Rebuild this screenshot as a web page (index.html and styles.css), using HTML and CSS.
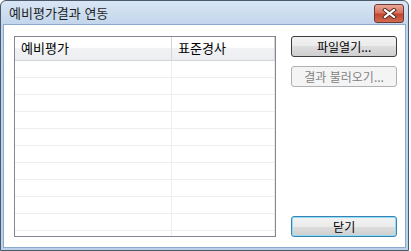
FILE: index.html
```html
<!DOCTYPE html>
<html lang="ko">
<head>
  <meta charset="UTF-8">
  <title>예비평가결과 연동</title>
  <link rel="stylesheet" href="styles.css">
</head>
<body>
  <div class="window">
    <div class="titlebar">
      <span class="title">예비평가결과 연동</span>
      <button class="close-btn" aria-label="닫기">
        <svg width="15" height="11" viewBox="0 0 15 11">
          <path d="M3 2 L12 9 M12 2 L3 9" stroke="#4a2a26" stroke-width="4" stroke-linecap="square"/>
          <path d="M3 2 L12 9 M12 2 L3 9" stroke="#fff" stroke-width="2.2" stroke-linecap="square"/>
        </svg>
      </button>
    </div>

    <div class="client">
      <div class="list">
        <div class="list-head">
          <div class="cell col-name">예비평가</div>
          <div class="cell col-grade">표준경사</div>
        </div>
        <div class="list-body" id="rows">
          <!-- rows inserted below -->
        </div>
      </div>

      <div class="side">
        <button class="btn btn-default">파일열기...</button>
        <button class="btn" disabled>결과 불러오기...</button>
        <button class="btn btn-focus bottom">닫기</button>
      </div>
    </div>
  </div>

  <script>
    // Empty grid rows
    const rows = document.getElementById('rows');
    for (let i = 0; i < 11; i++) {
      rows.innerHTML += '<div class="row"><div class="cell col-name"></div><div class="cell col-grade"></div></div>';
    }
  </script>
</body>
</html>
```

FILE: styles.css
```css
/* Global */
body {
  margin: 0;
  width: 411px;
  height: 251px;
  overflow: hidden;
  background: #fff;
  font-family: "Noto Sans CJK KR", "Noto Sans", sans-serif;
  font-size: 12px;
  color: #000;
}

/* Window frame */
.window {
  box-sizing: border-box;
  width: 409px;
  height: 251px;
  display: flex;
  flex-direction: column;
  border: 1px solid #4a5a6c;
  border-radius: 6px 6px 0 0;
  background: linear-gradient(#d9e6f4, #c2d5ec 24px, #bcd1ea);
  padding: 0 2px 2px 2px;
}

.titlebar {
  height: 24px;
  display: flex;
  align-items: center;
  justify-content: space-between;
  padding: 0 2px 0 6px;
}

.title {
  font-size: 13px;
  color: #1e1e1e;
}

.close-btn {
  width: 30px;
  height: 19px;
  margin-top: 1px;
  border: 1px solid #6e3a35;
  border-radius: 3px;
  background: linear-gradient(#eaa897, #d6735e 45%, #c4452e 55%, #d06b50);
  display: flex;
  align-items: center;
  justify-content: center;
  padding: 0;
}

/* Client area */
.client {
  flex: 1;
  display: flex;
  gap: 15px;
  background: #fff;
  border: 1px solid #8aa9cc;
  padding: 11px 8px 10px 10px;
}

/* List view */
.list {
  width: 263px;
  height: 201px;
  box-sizing: border-box;
  border: 1px solid #828790;
  overflow: hidden;
}

.list-head {
  display: flex;
  height: 24px;
  box-sizing: border-box;
  border-bottom: 1px solid #d5d5d5;
  background: linear-gradient(#ffffff, #ffffff 45%, #f1f2f4 50%, #eceef1);
}

.list-head .cell {
  border-right: 1px solid #d5d5d5;
  padding-left: 6px;
  line-height: 22px;
  font-size: 13px;
}

.cell {
  box-sizing: border-box;
}

.col-name {
  width: 157px;
}

.col-grade {
  width: 103px;
}

.row {
  display: flex;
  height: 17px;
  box-sizing: border-box;
  border-bottom: 1px solid #eeeeee;
}

.row .cell {
  border-right: 1px solid #eeeeee;
}

/* Buttons */
.side {
  width: 106px;
  display: flex;
  flex-direction: column;
  gap: 9px;
}

.btn {
  height: 21px;
  box-sizing: border-box;
  border: 1px solid #707070;
  border-radius: 3px;
  background: linear-gradient(#f2f2f2, #ebebeb 50%, #dddddd 50%, #cfcfcf);
  font-family: inherit;
  font-size: 12px;
  color: #000;
  padding: 0;
}

.btn-default {
  border-color: #3c3c3c;
}

.btn:disabled {
  border-color: #adb2b5;
  background: #f4f4f4;
  color: #838383;
}

.btn-focus {
  border-color: #3c7fb1;
  box-shadow: inset 0 0 0 1px #8ee0f8;
}

.bottom {
  margin-top: auto;
}
```
